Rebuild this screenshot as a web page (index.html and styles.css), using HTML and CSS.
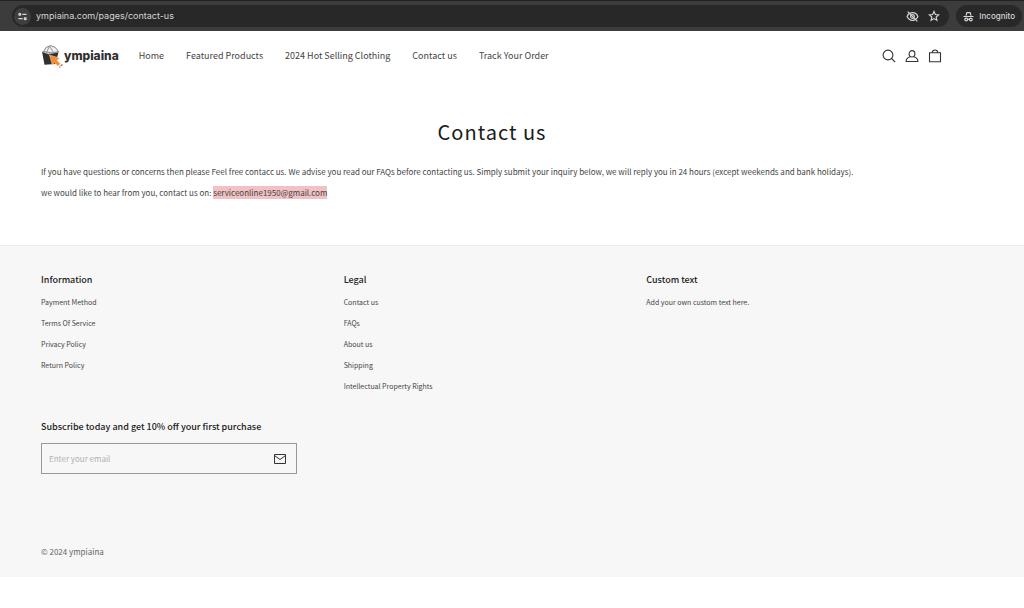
FILE: index.html
```html
<!DOCTYPE html>
<html lang="en">
<head>
<meta charset="utf-8">
<meta name="viewport" content="width=device-width, initial-scale=1">
<title>Contact us – ympiaina</title>
<link rel="stylesheet" href="styles.css">
</head>
<body>
<div class="toolbar">
  <div class="address">
    <button class="site-info" aria-label="Site information">
      <svg viewBox="0 0 10 10" width="9" height="9" fill="none" stroke="currentColor" stroke-width="1.5"><circle cx="2" cy="2.600" r="1"/><path d="M4.800 2.600H9.500M.5 7.400H5.200"/><circle cx="8" cy="7.400" r="1"/></svg>
    </button>
    <input class="url" type="text" aria-label="Address" value="ympiaina.com/pages/contact-us">
    <button class="tool" aria-label="Third-party cookies blocked">
      <svg viewBox="0 0 24 24" width="13" height="13" fill="none" stroke="currentColor" stroke-width="2.200"><path d="M2 12c2-4.500 5.500-7 10-7s8 2.500 10 7c-2 4.500-5.500 7-10 7s-8-2.500-10-7z"/><circle cx="12" cy="12" r="3.500"/><path d="M3 3l18 18"/></svg>
    </button>
    <button class="tool" aria-label="Bookmark this page">
      <svg viewBox="0 0 24 24" width="12" height="12" fill="none" stroke="currentColor" stroke-width="2.300"><path d="M12 3l2.700 6.100 6.600.6-5 4.400 1.500 6.500L12 17.200l-5.800 3.400 1.500-6.500-5-4.400 6.600-.6z"/></svg>
    </button>
  </div>
  <button class="incognito">
    <svg viewBox="0 0 24 24" width="11" height="11" fill="none" stroke="currentColor" stroke-width="2.600"><path d="M6.500 10L8.500 3.500h7l2 6.500M1 12h22"/><circle cx="7" cy="18.500" r="3"/><circle cx="17" cy="18.500" r="3"/><path d="M10 18h4"/></svg>
    Incognito
  </button>
</div>

<header class="header">
  <a class="logo" href="#">
    <svg viewBox="0 0 22 24" width="22" height="24" aria-hidden="true"><path d="M2.500 7.500Q4 2.500 9.500 1.500Q15 2.500 17.500 7.500L11 9z" fill="#eef1f2" stroke="#777" stroke-width=".9"/><path d="M5.500 8.500L8.500 2l4 6.500" fill="none" stroke="#888" stroke-width=".9"/><path d="M1 7.500l6.500 2.500L17.500 8l-3 12-11 .8z" fill="#303030"/><path d="M1 7.500l6.500 2.500L17.500 8" fill="none" stroke="#aaa" stroke-width=".8"/><path d="M8.500 11l10.500 3.200-3 2 3.400 3.600-2.600 2.400-3.400-3.700-2 2.800z" fill="#f58b2a" stroke="#fff" stroke-width=".4"/><path d="M18 23h1.500M21 20v1.500h-1.500" fill="none" stroke="#a8653f"/></svg>
    <span>ympiaina</span>
  </a>
  <nav class="nav" aria-label="Main">
    <a href="#">Home</a>
    <a href="#">Featured Products</a>
    <a href="#">2024 Hot Selling Clothing</a>
    <a href="#">Contact us</a>
    <a href="#">Track Your Order</a>
  </nav>
  <div class="actions">
    <button aria-label="Search"><svg viewBox="0 0 14 14" width="14" height="14"><circle cx="6" cy="6" r="4.900"/><path d="M9.500 9.500l3.700 3.700"/></svg></button>
    <a href="#" aria-label="Log in"><svg viewBox="0 0 14 14" width="14" height="14"><ellipse cx="7" cy="4.800" rx="2.900" ry="3.200"/><path d="M5.300 7.800C2.500 8.500 1.100 9.800 1.100 12.500h11.800c0-2.700-1.400-4-4.200-4.700"/></svg></a>
    <a href="#" aria-label="Cart"><svg viewBox="0 0 14 14" width="14" height="14"><path d="M1.500 3.700h11v9h-11zM4.300 3.700C4.300 .1 9.700 .1 9.700 3.700"/></svg></a>
  </div>
</header>

<main class="main">
  <h1>Contact us</h1>
  <p>If you have questions or concerns then please Feel free contacc us. We advise you read our FAQs before contacting us. Simply submit your inquiry below, we will reply you in 24 hours (except weekends and bank holidays).</p>
  <p>we would like to hear from you, contact us on: <mark>serviceonline1950@gmail.com</mark></p>
</main>

<footer class="footer">
  <div class="columns">
    <section>
      <h2>Information</h2>
      <ul>
        <li><a href="#">Payment Method</a></li>
        <li><a href="#">Terms Of Service</a></li>
        <li><a href="#">Privacy Policy</a></li>
        <li><a href="#">Return Policy</a></li>
      </ul>
    </section>
    <section>
      <h2>Legal</h2>
      <ul>
        <li><a href="#">Contact us</a></li>
        <li><a href="#">FAQs</a></li>
        <li><a href="#">About us</a></li>
        <li><a href="#">Shipping</a></li>
        <li><a href="#">Intellectual Property Rights</a></li>
      </ul>
    </section>
    <section>
      <h2>Custom text</h2>
      <p>Add your own custom text here.</p>
    </section>
  </div>
  <form class="newsletter">
    <h2><label for="email">Subscribe today and get 10% off your first purchase</label></h2>
    <div class="field">
      <input id="email" type="email" placeholder="Enter your email">
      <button type="button" aria-label="Subscribe"><svg viewBox="0 0 14 12" width="14" height="12"><path d="M1.500 1.500h11v9h-11zM1.500 2.500l5.500 4L12.500 2.500"/></svg></button>
    </div>
  </form>
  <p class="copyright">© 2024 ympiaina</p>
</footer>
</body>
</html>
```
FILE: styles.css
```css
* {
  box-sizing: border-box;
}

body {
  margin: 0;
  background: #fff;
  color: #444;
  font-family: "Noto Sans CJK SC", "Noto Sans", sans-serif;
  font-size: 8px;
  line-height: 12px;
}

h1, h2, p, ul {
  margin: 0;
  padding: 0;
  font-weight: 400;
}

a {
  color: inherit;
  text-decoration: none;
}

button {
  display: flex;
  align-items: center;
  padding: 0;
  border: 0;
  background: none;
  color: inherit;
  font: inherit;
}

input {
  min-width: 0;
  padding: 0;
  border: 0;
  background: none;
  color: inherit;
  font: inherit;
}

svg {
  display: block;
  flex: none;
}

.toolbar {
  display: flex;
  gap: 7px;
  padding: 4px 2px 4px 12px;
  border-top: 1px solid #222;
  background: #3c3c3c;
  color: #d5d5d5;
  font-family: Inter, sans-serif;
  font-size: 8px;
  font-weight: 500;
}

.address {
  display: flex;
  flex: 1;
  align-items: center;
  gap: 9px;
  height: 22px;
  padding: 0 9px 0 2px;
  border-radius: 11px;
  background: #282828;
}

.site-info {
  justify-content: center;
  width: 17px;
  height: 17px;
  border-radius: 50%;
  background: #3f3f3f;
}

.url {
  flex: 1;
  margin-left: -4px;
  font-size: 9px;
  font-weight: 400;
}

.incognito {
  gap: 5px;
  padding: 0 7px;
  border-radius: 11px;
  background: #282828;
}

.header {
  display: flex;
  align-items: center;
  height: 49px;
  padding: 0 82px 0 41px;
}

.logo {
  display: flex;
  align-items: center;
  gap: 1px;
  color: #303030;
  font-family: Inter, sans-serif;
  font-size: 12px;
  font-weight: 800;
  line-height: 20px;
}

.nav {
  display: flex;
  flex: 1;
  gap: 22px;
  margin-left: 20px;
  font-size: 9px;
  line-height: 14px;
}

.actions {
  display: flex;
  gap: 9px;
}

.actions svg,
.field svg {
  fill: none;
  stroke: #333;
  stroke-width: 1.1;
}

.field svg {
  stroke-width: 1;
}

.main {
  padding: 38px 81px 46px 41px;
}

.main h1 {
  margin-bottom: 20px;
  color: #1a1a1a;
  font-size: 20px;
  line-height: 28px;
  text-align: center;
  letter-spacing: 1px;
}

.main p + p {
  margin-top: 9px;
}

mark {
  padding: 1px 0;
  background: #f2c1c3;
  color: inherit;
}

.footer {
  padding: 28px 81px 19px 41px;
  border-top: 1px solid #ebebeb;
  background: #f7f7f7;
}

.columns {
  display: grid;
  grid-template-columns: repeat(3, 1fr);
  gap: 6px;
  font-size: 7px;
}

.footer h2 {
  color: #222;
  font-size: 9px;
  font-weight: 500;
  line-height: 12px;
}

.columns h2 {
  margin-bottom: 10px;
}

.columns ul {
  display: grid;
  gap: 9px;
  list-style: none;
}

.newsletter {
  max-width: 256px;
  margin-top: 29px;
}

.field {
  display: flex;
  align-items: center;
  height: 31px;
  margin-top: 10px;
  padding: 0 9px 0 7px;
  border: 1px solid #999;
}

.field input {
  flex: 1;
}

.field input::placeholder {
  color: #b0b0b0;
  opacity: 1;
}

.copyright {
  margin-top: 72px;
  color: #666;
}
```
